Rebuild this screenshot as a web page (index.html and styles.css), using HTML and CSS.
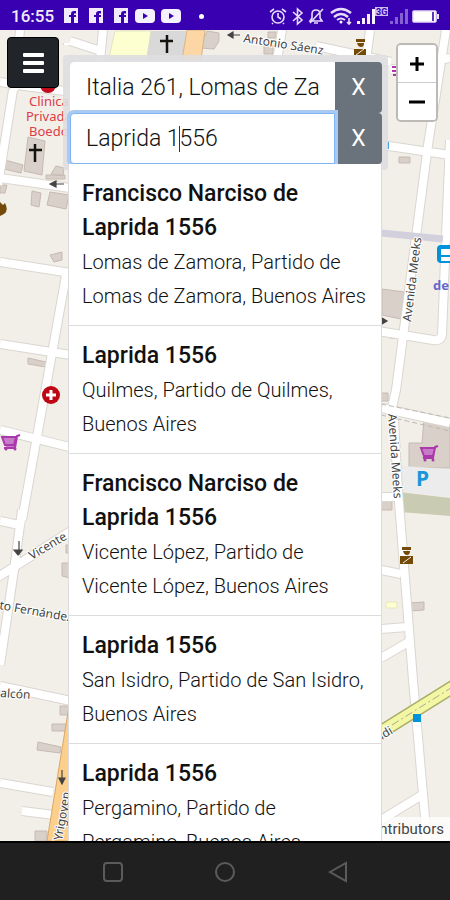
FILE: index.html
```html
<!DOCTYPE html>
<html lang="es">
<head>
<meta charset="utf-8">
<meta name="viewport" content="width=device-width, initial-scale=1">
<title>Mapa</title>
<link rel="stylesheet" href="styles.css">
</head>
<body>
<header class="status">
  <span class="clock">16:55</span>
  <div class="notes">
    <svg width="16" height="16" viewBox="0 0 16 16"><path fill="#f1eafc" fill-rule="evenodd" d="M1 0h14v15h-4V9h2V7h-2V5.500h2V3h-2Q8 3 8 6v1H6v2h2v6H1z"/></svg>
    <svg width="16" height="16" viewBox="0 0 16 16"><path fill="#f1eafc" fill-rule="evenodd" d="M1 0h14v15h-4V9h2V7h-2V5.500h2V3h-2Q8 3 8 6v1H6v2h2v6H1z"/></svg>
    <svg width="16" height="16" viewBox="0 0 16 16"><path fill="#f1eafc" fill-rule="evenodd" d="M1 0h14v15h-4V9h2V7h-2V5.500h2V3h-2Q8 3 8 6v1H6v2h2v6H1z"/></svg>
    <svg class="video" width="20" height="16" viewBox="0 0 20 16"><rect x="0" y="1" width="20" height="14" rx="4" fill="#f6f1ff"/><path d="M8 5l5 3-5 3z" fill="#3800b0"/></svg>
    <svg class="video" width="20" height="16" viewBox="0 0 20 16"><rect x="0" y="1" width="20" height="14" rx="4" fill="#f6f1ff"/><path d="M8 5l5 3-5 3z" fill="#3800b0"/></svg>
    <span class="dot"></span>
  </div>
  <svg class="system" width="174" height="22" viewBox="269 4 174 22" fill="none" stroke="#e6dcfa" stroke-width="1.600">
    <circle cx="279" cy="16" r="6"/><path d="M279 12v4l3 2M271 11l4-3M287 11l-4-3M274 22l-1 1M284 22l1 1"/>
    <path d="M294 11l9 8-4.500 4V8l4.500 4-9 8"/>
    <path d="M311 20h12l-2-3v-4q0-4-4-4t-4 4v4zM315 22h4M311 22l13-14"/>
    <path stroke-width="2.500" d="M332 12q10-8 20 0M335 16q7-6 14 0"/><path stroke-width="2" d="M338 19q4-3 8 0"/><circle cx="342" cy="21" r="1.500" fill="#fff" stroke="none"/><path d="M350 17v6M348 21l2 2 2-2"/>
    <g fill="#f6f1ff" stroke="none"><path d="M358 20h3v3h-3zM363 17h3v6h-3zM368 13h3v10h-3zM373 8h3v15h-3z"/></g>
    <g fill="#8460d0" stroke="none"><path d="M391 20h3v3h-3zM396 16h3v7h-3zM401 12h3v11h-3zM406 8h3v15h-3z"/></g>
    <rect x="376" y="6" width="13" height="9" fill="#cdbcf0" stroke="none"/>
    <text class="net" x="377" y="14">3G</text>
    <rect x="414" y="10" width="23" height="11" rx="1" fill="#fff"/><path d="M434 11v9" stroke="#3800b0"/><path d="M439 13v5" stroke-width="2"/>
  </svg>
</header>

<main class="stage">
  <svg class="map" viewBox="0 30 450 811" preserveAspectRatio="xMidYMin slice" aria-hidden="true">
    <defs>
      <g id="roads">
        <path d="M0 82l24 4 180 22M13 90L-2 185M20 30l-6 60M103 30l-6 62M70 41l34 11M68 43v2M0 178l70 10M0 262l90 14M0 344l90 14M67 270L22 520M0 430l90 22M-2 577l92-58M22 510L14 570 0 665M0 521l24 5M0 686l90 19M0 783l53 9M22 811l32 4"/>
        <path d="M282 30l-5 30M370 30l-4 30M316 46l75 16M450 58l-60 12M446 30L428 145 396 390 391 412M382 145l68 10M450 140l-5 120-3 75q-1 6-9 5l-55-9M382 408l68 15"/>
        <path d="M381 497h15M394 420l4 70 15 190 14 160M381 570l20 4M381 629l26-2M381 658l31-18M381 820l41-25"/>
      </g>
    </defs>
    <rect y="30" width="450" height="811" fill="#f2efe9"/>
    <g fill="#d9d0c9" stroke="#c6bab2" stroke-width="1">
      <path d="M28 137l17 4-3 34-18-4zM5 160l18 5-2 8-17-4zM56 166l8 2-1 8-12-2zM46 175h19v4H46zM32 191l9 2-2 14-8-2zM50 192l19 3-3 14-19-4zM0 185h7l-2 8H0zM50 255l12-3v8l-8 2zM28 358l18 4v5l-18-3zM66 545h6v8h-6zM62 563h8v15l-8-2zM60 706h9v9h-9zM52 724h14v7H52zM38 742l23 5-1 6-23-3zM35 831h12v10H35z"/>
      <path d="M207 31l12 2v8l-5 8-13-1 2-8zM268 32h8v6h-8zM264 45h9v9h-9zM399 157h11v6h-11zM382 289l22 3-3 27-19-4zM390 332h6v6h-6zM381 393h7v8h-7zM424 419l26 5v44h-41v-25h13zM409 603l15-1v8l-14 1zM381 499l11 2v9h-11z"/>
    </g>
    <path fill="#feffd0" stroke="#e6e5c2" d="M115 31h36l-4 27h-38zM386 602h11v6h-11z"/>
    <path fill="#d9d9d9" d="M151 31h35l-3 29h-37z"/>
    <path fill="#fcd6a4" stroke="#d9b483" d="M187 30h18l-4 30h-19z"/>
    <path fill="#ececec" d="M400 466l50 3v28l-51-6z"/>
    <path fill="#c9cbb2" d="M399 492l51 6v18l-50-4z"/>
    <use href="#roads" class="casing"/>
    <use href="#roads" class="surface"/>
    <path d="M381 233l62 6" stroke="#d2d0dd" stroke-width="7"/>
    <path d="M381 404l69 14M381 415l69 16" stroke="#bdb8b0" stroke-dasharray="5 3"/>
    <path fill="#fccf8c" stroke="#dba760" d="M70 700l-23 141h23z"/>
    <path d="M376 735l80-50" stroke="#a9ad68" stroke-width="14"/><path d="M376 735l80-50" stroke="#f3f6a2" stroke-width="11"/><path d="M392 725l62-39" stroke="#ada991" stroke-dasharray="8 3 2 3"/>
    <rect x="413" y="714" width="8" height="8" fill="#0092da"/>
    <g fill="none" stroke="#15130f" stroke-width="2.500"><path d="M167 35v18M160 41h13M35 144v18M29 150h13"/></g>
    <g stroke="#444" fill="#444" stroke-width="1.200"><path d="M228 35h12M228 35l5-3v6zM50 184h14M50 184l6-3v6zM19 541v14M18 555l-4-5h8zM62 770v13M62 784l-3-6h6zM381 321h5M387 321l-5-3v6z"/></g>
    <g fill="#734a08"><path d="M356 39h9v3h-9zM357 43h7q0 4-3 4t-4-4zM354 49h12v6h-12zM402 547h9v3h-9zM403 551h7q0 4-3 4t-4-4zM400 556h13v8h-13zM0 202l3 3 2-2q4 8-1 11l-4 2z"/><path d="M356 55l8-6M403 563l8-6" stroke="#f2efe9"/></g>
    <circle cx="48" cy="85" r="8" fill="#c40d1c"/>
    <circle cx="51" cy="395" r="9" fill="#bd0714"/><path d="M51 390v10M46 395h10" stroke="#fff" stroke-width="3"/>
    <g fill="none" stroke="#ac39ac" stroke-width="2"><path fill="#c77cc7" d="M2 437h14l-2 8H5zM20 435l-3 1-2 12H4"/><path fill="#c77cc7" d="M421 448h14l-2 8h-9zM438 446l-3 1-2 11h-10"/><path d="M392 67h7M392 71h7M393 75h6"/></g>
    <g fill="#ac39ac"><circle cx="6" cy="449" r="1.500"/><circle cx="15" cy="449" r="1.500"/><circle cx="425" cy="460" r="1.500"/><circle cx="433" cy="460" r="1.500"/></g>
    <rect x="437" y="245" width="18" height="18" rx="4" fill="#0092da"/><path fill="#fff" d="M441 249h10v6h-10zM441 257h10v4h-10z"/>
    <path d="M388 142v7" stroke="#4aa5df" stroke-width="2"/>
    <g class="street">
      <text transform="translate(243 42) rotate(9)">Antonio Sáenz</text>
      <text transform="translate(411 322) rotate(-83)">Avenida Meeks</text>
      <text transform="translate(388 414) rotate(86)">Avenida Meeks</text>
      <text transform="translate(32 560) rotate(-31)">Vicente</text>
      <text transform="translate(-1 609) rotate(10)">to Fernández</text>
      <text transform="translate(0 697) rotate(4)">alcón</text>
      <text transform="translate(62 841) rotate(-80)">Yrigoyen</text>
      <text transform="translate(382 740) rotate(-32)">idi</text>
    </g>
    <g class="clinic"><text x="29" y="106">Clinica</text><text x="26" y="121">Privada</text><text x="29" y="136">Boedo</text></g>
    <text class="station" x="433" y="290">de</text>
    <text class="parking" x="416" y="486">P</text>
  </svg>
  <p class="credit">contributors</p>

  <div class="controls">
    <button class="menu" type="button" aria-label="Menú"><span></span><span></span><span></span></button>
    <form class="search">
      <div class="field">
        <input type="text" aria-label="Origen" value="Italia 261, Lomas de Za">
        <button type="button" aria-label="Borrar origen">X</button>
      </div>
      <div class="field active">
        <input type="text" aria-label="Destino" value="Laprida 1556">
        <i class="caret"></i>
        <button type="button" aria-label="Borrar destino">X</button>
      </div>
      <ul class="results">
        <li><strong>Francisco Narciso de Laprida 1556</strong><span>Lomas de Zamora, Partido de Lomas de Zamora, Buenos Aires</span></li>
        <li><strong>Laprida 1556</strong><span>Quilmes, Partido de Quilmes, Buenos Aires</span></li>
        <li><strong>Francisco Narciso de Laprida 1556</strong><span>Vicente López, Partido de Vicente López, Buenos Aires</span></li>
        <li><strong>Laprida 1556</strong><span>San Isidro, Partido de San Isidro, Buenos Aires</span></li>
        <li><strong>Laprida 1556</strong><span>Pergamino, Partido de Pergamino, Buenos Aires</span></li>
      </ul>
    </form>
    <div class="zoom">
      <button type="button" aria-label="Acercar"><svg width="16" height="16" viewBox="0 0 16 16"><path d="M8 1v14M1 8h14" stroke="#000" stroke-width="3"/></svg></button>
      <button type="button" aria-label="Alejar"><svg width="16" height="16" viewBox="0 0 16 16"><path d="M0 8h16" stroke="#000" stroke-width="3"/></svg></button>
    </div>
  </div>
</main>

<nav class="softkeys" aria-label="Sistema">
  <button type="button" aria-label="Recientes"><svg width="22" height="22" viewBox="0 0 22 22"><rect x="2" y="2" width="18" height="18" rx="3"/></svg></button>
  <button type="button" aria-label="Inicio"><svg width="22" height="22" viewBox="0 0 22 22"><circle cx="11" cy="11" r="9"/></svg></button>
  <button type="button" aria-label="Atrás"><svg width="22" height="22" viewBox="0 0 22 22"><path d="M3 11l16-9v18z"/></svg></button>
</nav>
</body>
</html>
```

FILE: styles.css
```css
* { box-sizing: border-box; }

body {
  margin: 0;
  height: 100vh;
  display: flex;
  flex-direction: column;
  overflow: hidden;
  font-family: Roboto, "Liberation Sans", sans-serif;
  color: #111;
}

button { font: inherit; padding: 0; border: 0; cursor: pointer; }

.status {
  flex: none;
  height: 30px;
  display: flex;
  align-items: center;
  padding: 2px 8px 0 11px;
  background: #3800b0;
  color: #f1eafc;
}
.clock { font-size: 17px; font-weight: 500; line-height: 24px; }
.notes { display: flex; align-items: center; gap: 9px; margin-left: 9px; }
.video { margin-left: -3px; }
.dot { width: 5px; height: 5px; margin-left: 9px; border-radius: 50%; background: #fff; }
.system { margin-left: auto; }
.net { font-size: 9px; font-weight: 700; fill: #3800b0; stroke: none; }

.stage { flex: 1; min-height: 0; position: relative; overflow: hidden; background: #f2efe9; }
.map { position: absolute; inset: 0; width: 100%; height: 100%; fill: none; }
.casing { stroke: #dad6d0; stroke-width: 10px; }
.surface { stroke: #fff; stroke-width: 8px; }
.street { font: 12px "Noto Sans", sans-serif; fill: #444; stroke: #fff; stroke-width: 2px; paint-order: stroke; }
.clinic { font: 13px "Noto Sans", sans-serif; fill: #dc3c48; }
.station { font: 700 13px "Noto Sans", sans-serif; fill: #6666cc; }
.parking { font: 700 21px "Noto Sans", sans-serif; fill: #1a96da; }

.credit {
  position: absolute;
  right: 0;
  bottom: 0;
  margin: 0;
  padding: 0 6px 0 5px;
  background: rgba(255, 255, 255, .75);
  color: #444;
  font-size: 15px;
  line-height: 24px;
}

.controls { position: relative; display: flex; align-items: flex-start; padding: 7px 12px 0 7px; }

.menu {
  width: 52px;
  height: 51px;
  display: flex;
  flex-direction: column;
  align-items: center;
  justify-content: center;
  gap: 4px;
  border: 1px solid #000;
  border-radius: 4px;
  background: #212529;
}
.menu span { width: 21px; height: 4px; border-radius: 1px; background: #fff; }

.search {
  flex: 1;
  min-width: 0;
  position: relative;
  margin: 18px 8px 0 4px;
  padding: 7px 6px 6px 7px;
  border-radius: 4px;
  background: rgba(222, 222, 225, .9);
}
.field { position: relative; display: flex; height: 51px; }
.field input {
  flex: 1;
  min-width: 0;
  padding: 0 14px 0 15px;
  border: 1px solid #fff;
  border-radius: 4px 0 0 4px;
  background: #fff;
  color: #111;
  font: 300 23px Roboto, "Liberation Sans", sans-serif;
  outline: 0;
}
.field button {
  width: 47px;
  border-radius: 0 4px 4px 0;
  background: #6a737b;
  color: #fff;
  font-size: 23px;
}
.active input {
  position: relative;
  z-index: 1;
  border-color: #80b5f5;
  box-shadow: 0 0 0 3px #a9c9f2;
}
.caret { position: absolute; z-index: 2; left: 109px; top: 13px; width: 1px; height: 26px; background: #333; }

.results {
  position: absolute;
  z-index: 3;
  top: 109px;
  left: 5px;
  right: 6px;
  margin: 0;
  padding: 0;
  list-style: none;
  border: solid #dcdcdc;
  border-width: 0 1px;
  background: #fff;
}
.results li { padding: 13px 13px 12px; border-bottom: 1px solid #dcdcdc; line-height: 34px; }
.results strong, .results span { display: block; }
.results strong { font-size: 23px; font-weight: 500; }
.results span { font-size: 20px; font-weight: 300; color: #111; }

.zoom { width: 42px; margin-top: 6px; border: 2px solid #bdbab5; border-radius: 5px; overflow: hidden; }
.zoom button { display: flex; align-items: center; justify-content: center; width: 100%; height: 37px; background: #fff; }
.zoom button + button { height: 38px; border-top: 1px solid #ccc; }

.softkeys {
  flex: none;
  height: 59px;
  display: flex;
  align-items: center;
  padding: 0 12.5%;
  border-top: 2px solid #000;
  background: #202020;
}
.softkeys button { flex: 1; height: 22px; background: none; }
.softkeys svg { display: block; margin: 0 auto; fill: none; stroke: #5b5b5b; stroke-width: 2px; }
```
